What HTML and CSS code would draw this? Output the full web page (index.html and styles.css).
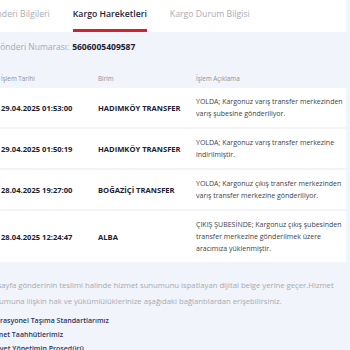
FILE: index.html
```html
<!DOCTYPE html>
<html lang="tr">
<head>
    <meta charset="UTF-8">
    <title>Kargo Hareketleri</title>
    <link rel="stylesheet" href="styles.css">
</head>
<body>
<div class="page">
    <nav class="tabs">
        <a class="tab" href="#">Gönderi Bilgileri</a>
        <a class="tab active" href="#">Kargo Hareketleri</a>
        <a class="tab" href="#">Kargo Durum Bilgisi</a>
    </nav>

    <div class="panel">
        <div class="tracking">Gönderi Numarası: <b>5606005409587</b></div>

        <table class="moves">
            <thead>
            <tr>
                <th class="col-date">İşlem Tarihi</th>
                <th class="col-unit">Birim</th>
                <th>İşlem Açıklama</th>
            </tr>
            </thead>
            <tbody>
            <tr>
                <td class="strong">29.04.2025 01:53:00</td>
                <td class="strong">HADIMKÖY TRANSFER</td>
                <td>YOLDA; Kargonuz varış transfer merkezinden varış şubesine gönderiliyor.</td>
            </tr>
            <tr>
                <td class="strong">29.04.2025 01:50:19</td>
                <td class="strong">HADIMKÖY TRANSFER</td>
                <td>YOLDA; Kargonuz varış transfer merkezine indirilmiştir.</td>
            </tr>
            <tr>
                <td class="strong">28.04.2025 19:27:00</td>
                <td class="strong">BOĞAZİÇİ TRANSFER</td>
                <td>YOLDA; Kargonuz çıkış transfer merkezinden varış transfer merkezine gönderiliyor.</td>
            </tr>
            <tr>
                <td class="strong">28.04.2025 12:24:47</td>
                <td class="strong">ALBA</td>
                <td>ÇIKIŞ ŞUBESİNDE; Kargonuz çıkış şubesinden transfer merkezine gönderilmek üzere aracımıza yüklenmiştir.</td>
            </tr>
            </tbody>
        </table>

        <div class="note">
            <p>Bu sayfa gönderinin teslimi halinde hizmet sunumunu ispatlayan dijital belge yerine geçer.Hizmet<br>sunumuna ilişkin hak ve yükümlülüklerinize aşağıdaki bağlantılardan erişebilirsiniz.</p>
            <ul>
                <li><a href="#">Operasyonel Taşıma Standartlarımız</a></li>
                <li><a href="#">Hizmet Taahhütlerimiz</a></li>
                <li><a href="#">Şikayet Yönetimin Prosedürü</a></li>
            </ul>
        </div>
    </div>
</div>
</body>
</html>
```

FILE: styles.css
```css
* {
    box-sizing: border-box;
}
body {
    margin: 0;
    font-family: "Open Sans", "DejaVu Sans", sans-serif;
    background: #f1f4fa;
    color: #1d2130;
}

.page {
    margin-left: -20px;
    width: 366px;
}

.tabs {
    display: flex;
    gap: 23px;
    height: 32px;
    padding-left: 5px;
    background: #fff;
}

.tab {
    display: flex;
    align-items: center;
    height: 32px;
    padding-bottom: 2px;
    border-bottom: 3px solid transparent;
    font-size: 8.7px;
    font-weight: 500;
    color: #a9adb6;
    text-decoration: none;
    white-space: nowrap;
}

.tab.active {
    color: #1f2433;
    font-weight: 600;
    border-bottom-color: #d3202d;
}

.panel {
    padding-left: 14px;
}

.tracking {
    height: 28px;
    display: flex;
    align-items: center;
    font-size: 8.5px;
    color: #a6aab3;
}

.tracking b {
    margin-left: 3px;
    color: #1d2130;
    font-weight: 700;
}

.moves {
    width: 100%;
    border-collapse: collapse;
    table-layout: fixed;
}

.moves th {
    height: 28px;
    padding: 8px 7px 0;
    text-align: left;
    font-size: 6.3px;
    font-weight: 400;
    color: #8d929c;
}

.moves .col-date {
    width: 97px;
}

.moves .col-unit {
    width: 98px;
}

.moves td {
    padding: 7.5px 3px 7.5px 7px;
    vertical-align: middle;
    font-size: 7px;
    line-height: 12px;
    color: #3a3f4d;
    background: #fff;
}

.moves tbody tr + tr td {
    border-top: 2px solid #f3f4f7;
}

.moves td.strong {
    font-size: 7.6px;
    font-weight: 700;
    color: #1d2130;
    white-space: nowrap;
}

.note {
    margin-left: -8px;
    padding-top: 15px;
}

.note p {
    margin: 0 0 5px;
    font-size: 7.7px;
    line-height: 16px;
    color: #a6aab3;
    white-space: nowrap;
}

.note ul {
    list-style: none;
    margin: 0;
    padding: 0;
}

.note li {
    font-size: 7px;
    line-height: 14px;
}

.note a {
    font-weight: 600;
    color: #2c3463;
    text-decoration: none;
}
```
